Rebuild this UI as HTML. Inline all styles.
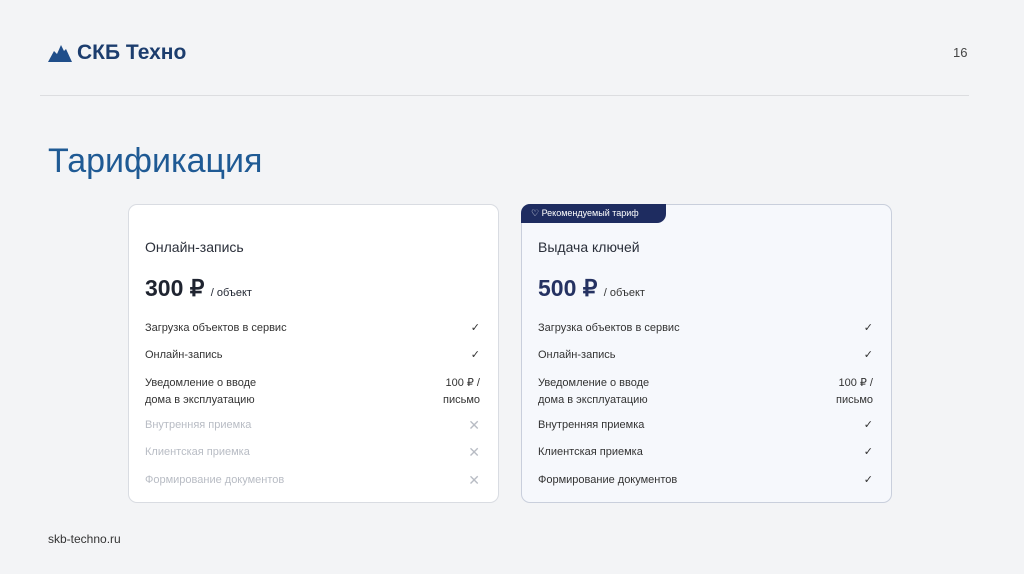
<!DOCTYPE html>
<html><head><meta charset="utf-8"><style>
*{margin:0;padding:0;box-sizing:border-box}
body{width:1024px;height:574px;background:#f3f4f6;font-family:"Liberation Sans",sans-serif;position:relative;overflow:hidden;color:#2a2f3a}
.abs{position:absolute}
.card{position:absolute;top:204px;width:371px;height:299px;border:1px solid #d9dce2;border-radius:9px;background:#fff}
.card.r{background:#f6f8fc;border-color:#c9cfdc}
.t{position:absolute;left:16px;top:34px;font-size:14px;color:#2a2f3a}
.p{position:absolute;left:16px;top:70px;font-size:23px;font-weight:bold;color:#1f2430}
.p span{font-size:11px;font-weight:normal}
.row{position:absolute;left:16px;font-size:11px;color:#333}
.mk{position:absolute;right:18px;font-size:11px;color:#333;text-align:right;line-height:17px}
.g{color:#b8bcc4}
</style></head><body>
<div class="abs" style="left:48px;top:41px;display:flex;align-items:center">
<svg width="24" height="18" viewBox="0 0 24 18"><path d="M0 18 L6 7 L9 10 L13 1 L16 7 L18 5 L24 18Z" fill="#1f4e8a"/></svg>
<span style="font-size:21px;font-weight:bold;color:#1c3d6e;margin-left:5px;letter-spacing:0px">СКБ Техно</span></div>
<div class="abs" style="left:953px;top:45px;font-size:13px;color:#444">16</div>
<div class="abs" style="left:40px;top:95px;width:929px;height:1px;background:#dcdde0"></div>
<div class="abs" style="left:48px;top:142px;font-size:34px;color:#1f5a94">Тарификация</div>

<div class="card" style="left:128px">
<div class="t">Онлайн-запись</div>
<div class="p">300 ₽ <span>/ объект</span></div>
<div class="row" style="top:117px">Загрузка объектов в сервис</div><div class="mk" style="top:115px">✓</div>
<div class="row" style="top:144px">Онлайн-запись</div><div class="mk" style="top:142px">✓</div>
<div class="row" style="top:170px;line-height:17px">Уведомление о вводе<br>дома в эксплуатацию</div><div class="mk" style="top:170px">100 ₽ /<br>письмо</div>
<div class="row g" style="top:214px">Внутренняя приемка</div><div class="mk g" style="top:212px;font-size:14px">✕</div>
<div class="row g" style="top:241px">Клиентская приемка</div><div class="mk g" style="top:239px;font-size:14px">✕</div>
<div class="row g" style="top:269px">Формирование документов</div><div class="mk g" style="top:267px;font-size:14px">✕</div>
</div>

<div class="card r" style="left:521px">
<div class="abs" style="left:-1px;top:-1px;width:145px;height:19px;background:#1e2c60;border-radius:9px 0 9px 0;color:#fff;font-size:9px;line-height:19px;padding-left:10px">♡ Рекомендуемый тариф</div>
<div class="t">Выдача ключей</div>
<div class="p" style="color:#253262">500 ₽ <span style="color:#333">/ объект</span></div>
<div class="row" style="top:117px">Загрузка объектов в сервис</div><div class="mk" style="top:115px">✓</div>
<div class="row" style="top:144px">Онлайн-запись</div><div class="mk" style="top:142px">✓</div>
<div class="row" style="top:170px;line-height:17px">Уведомление о вводе<br>дома в эксплуатацию</div><div class="mk" style="top:170px">100 ₽ /<br>письмо</div>
<div class="row" style="top:214px">Внутренняя приемка</div><div class="mk" style="top:212px">✓</div>
<div class="row" style="top:241px">Клиентская приемка</div><div class="mk" style="top:239px">✓</div>
<div class="row" style="top:269px">Формирование документов</div><div class="mk" style="top:267px">✓</div>
</div>

<div class="abs" style="left:48px;top:532px;font-size:12px;color:#333">skb-techno.ru</div>
</body></html>
